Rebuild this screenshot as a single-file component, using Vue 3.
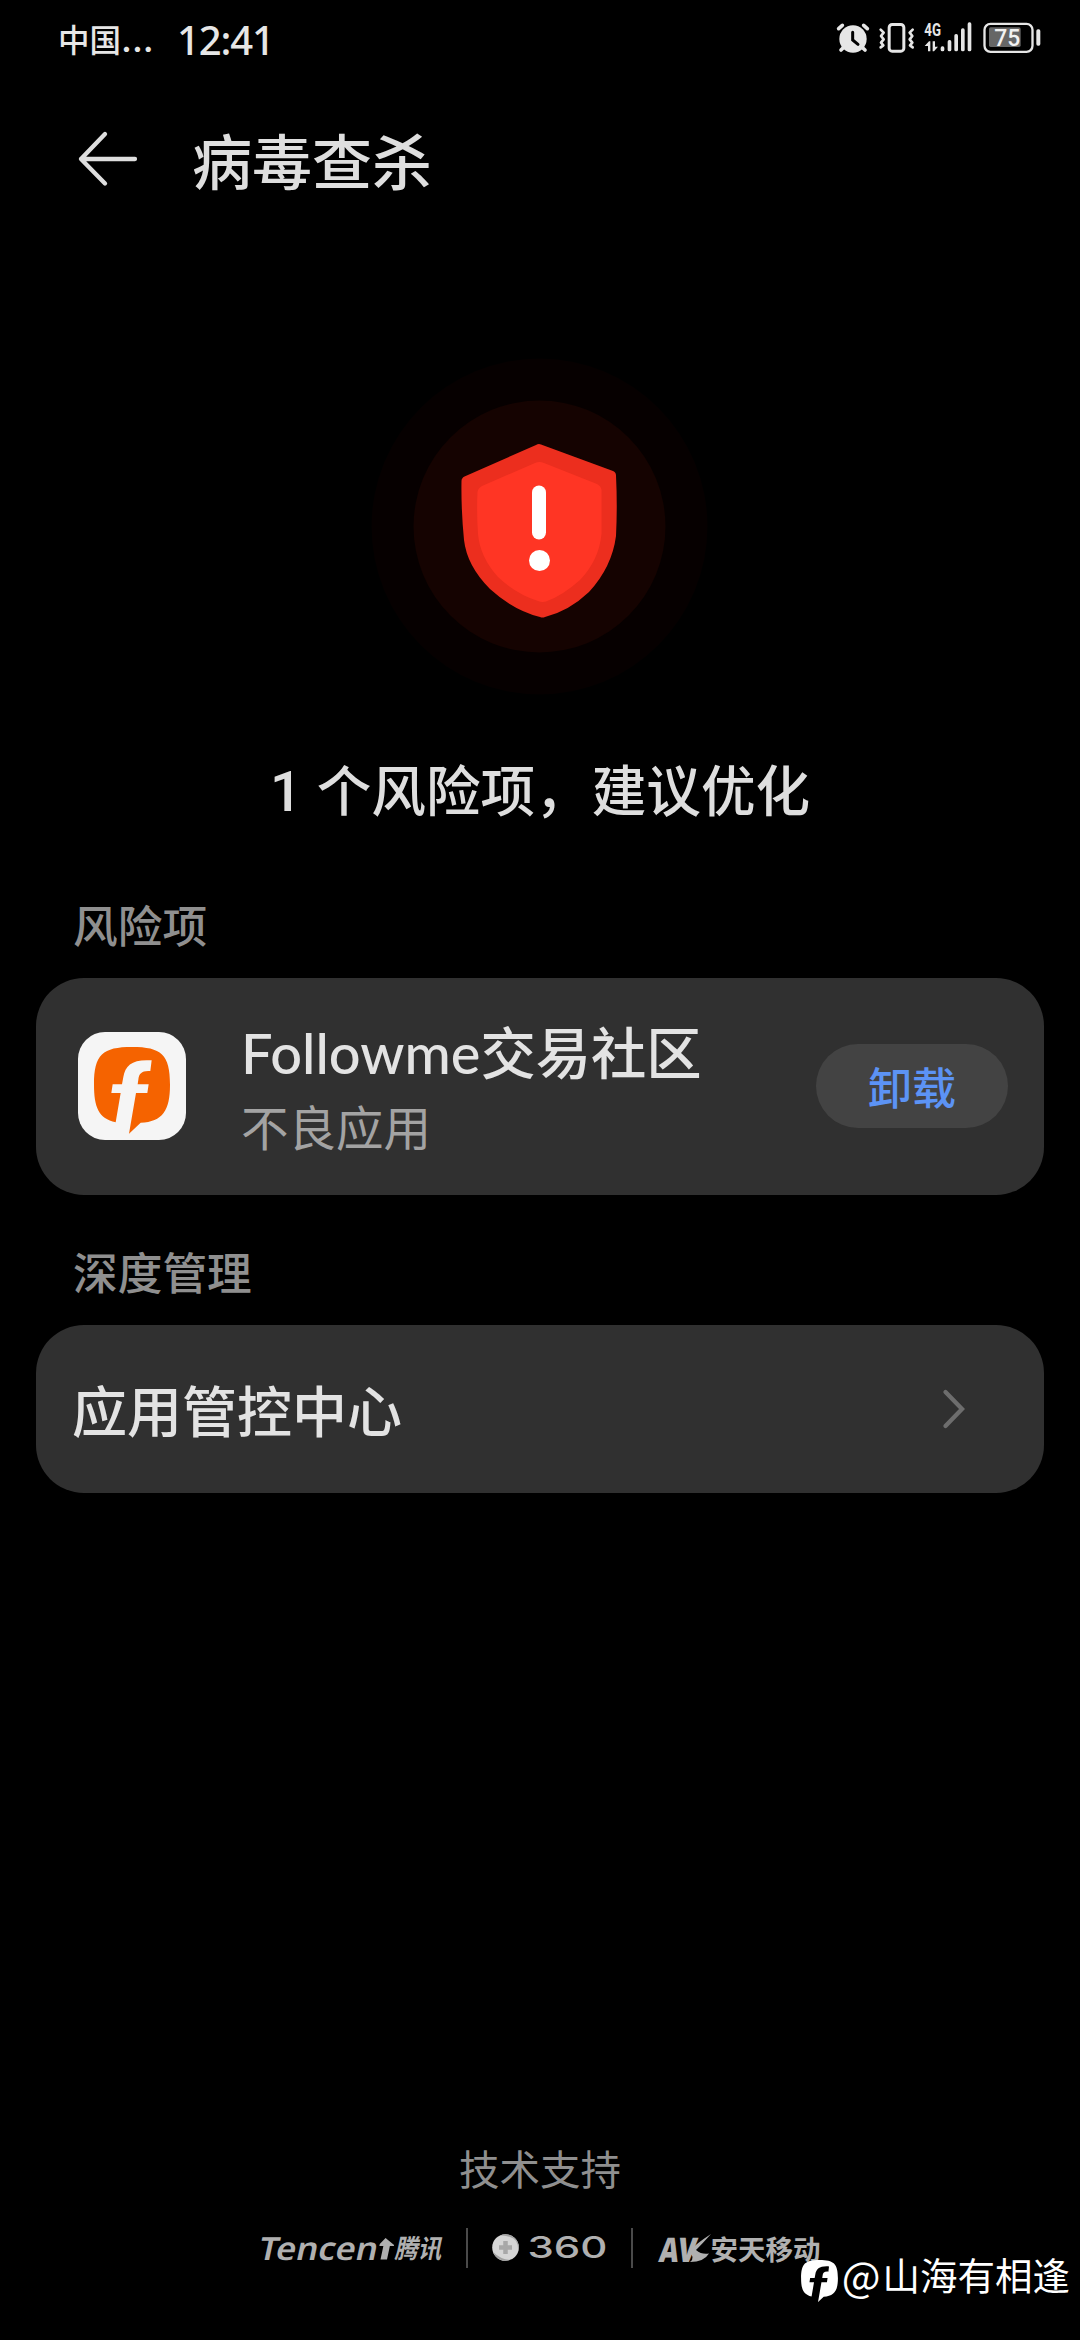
<script setup>
import { h } from 'vue'

const bubble =
  'M306 470C394 470 420 492 420 583C420 660 398 694 332 697L297 730L290 699L257 696C206 684 192 650 192 583C192 492 218 470 306 470Z'
const stem =
  'M365 510L361 542C337 540 327 548 325 568L323 582L356 582L352 608L318 608L297 730L250 730L257 696L272 608L244 608L248 582L276 582L280 560C286 524 308 506 365 510Z'

// Brand mark: speech bubble with the cut-out stem
const BrandMark = (props) =>
  h('svg', { viewBox: '192 470 228 260' }, [
    h('path', { d: bubble, fill: props.fill }),
    h('path', { d: stem, fill: props.cut }),
  ])
BrandMark.props = ['fill', 'cut']

const bars = [
  { x: 422, y: 139 },
  { x: 443, y: 120 },
  { x: 463, y: 102 },
  { x: 483, y: 85 },
  { x: 503, y: 67 },
]
const risks = [{ name: 'Followme', suffix: '交易社区', type: '不良应用' }]
</script>

<template>
  <div class="screen">
    <header class="status">
      <span class="carrier">中国<i>...</i></span>
      <span class="clock">12:41</span>
      <div class="indicators">
        <svg class="alarm" viewBox="108 60 102 102">
          <g stroke="#e6e6e6" stroke-width="11" stroke-linecap="round" fill="none">
            <path d="M116 86L127 76M202 86L191 76M133 140L123 150M184 140L195 150" />
          </g>
          <circle cx="159" cy="117" r="41" fill="#e6e6e6" />
          <path d="M158 97V120L174 133" stroke="#000" stroke-width="9" stroke-linecap="round" fill="none" />
        </svg>
        <svg class="vibrate" viewBox="234 60 114 102" fill="none" stroke="#e6e6e6" stroke-linejoin="round" stroke-linecap="round">
          <rect x="267.500" y="73.500" width="44" height="80" rx="9" stroke-width="9" />
          <path d="M242 89L251 98L243 108L251 118L243 128L250 136L242 142M338 89L329 98L337 108L329 118L337 128L330 136L338 142" stroke-width="8" />
        </svg>
        <svg class="signal" viewBox="369 60 150 102" fill="#e6e6e6">
          <text x="373" y="107" font-size="54" font-weight="700" textLength="50" lengthAdjust="spacingAndGlyphs">4G</text>
          <path d="M374 138L387 124H391V154H384V138ZM398 124H405V140H414L402 154H398Z" />
          <rect v-for="b in bars" :key="b.x" :x="b.x" :y="b.y" width="11" :height="154 - b.y" rx="5" />
        </svg>
        <svg class="battery" viewBox="546 60 180 102">
          <rect x="553.500" y="71.500" width="144" height="84" rx="18" fill="none" stroke="#e6e6e6" stroke-width="7" />
          <rect x="567" y="82" width="95" height="59" rx="5" fill="#666" />
          <rect x="709" y="88" width="12" height="49" rx="5" fill="#e6e6e6" />
          <text x="583" y="139" font-size="73" font-weight="500" fill="#f2f2f2" textLength="78" lengthAdjust="spacingAndGlyphs">75</text>
        </svg>
      </div>
    </header>

    <nav class="titlebar">
      <svg class="back" viewBox="0 0 60 56" fill="none" stroke="#dedede" stroke-width="4.300" stroke-linecap="round" stroke-linejoin="round">
        <path d="M57 28H3M27 3L3 28L27 52.500" />
      </svg>
      <h1>病毒查杀</h1>
    </nav>

    <section class="hero">
      <svg class="shield" viewBox="370 356 340 340">
        <circle cx="539.500" cy="526.500" r="168" fill="#060000" />
        <circle cx="539.500" cy="526.500" r="126" fill="#150301" />
        <path d="M536 445Q538.500 443.500 541 444.500L613 471Q616 472.300 616 475.500Q617.500 506 616 536Q612 567 589 592Q569 611 545 617Q542.500 618 540 617Q513 610 490 589Q467 566 464 540Q461 509 461.500 481Q461.500 478 464.500 476.500Z" fill="#ec2e1e" />
        <path d="M535 463Q539.500 461 544 463L597 484Q601 486 601.500 490V534Q599 560 580 580Q562 596 546 601.500Q542 602.500 538 601Q516 594 498 577Q480 557 478 534Q476.500 512 477.500 492Q478 488 482 486Z" fill="#ff3524" />
        <rect x="532" y="485.500" width="14" height="54" rx="7" fill="#fff" />
        <circle cx="539.500" cy="560.500" r="10.500" fill="#fff" />
      </svg>
      <h2><span>1</span>个风险项，<b>建议优化</b></h2>
    </section>

    <h3 class="label">风险项</h3>
    <ul class="card risks">
      <li v-for="r in risks" :key="r.name">
        <div class="app-icon"><BrandMark class="mark" fill="#f56300" cut="#f5f5f5" /></div>
        <div class="info">
          <p class="name"><span>{{ r.name }}</span>{{ r.suffix }}</p>
          <p class="type">{{ r.type }}</p>
        </div>
        <button>卸载</button>
      </li>
    </ul>

    <h3 class="label deep">深度管理</h3>
    <div class="card link">
      <span>应用管控中心</span>
      <svg viewBox="0 0 22 40" fill="none" stroke="#6d6d6d" stroke-width="4.300" stroke-linecap="round" stroke-linejoin="miter">
        <path d="M2.500 3L19 20L2.500 37" />
      </svg>
    </div>

    <footer>
      <p>技术支持</p>
      <div class="partners">
        <svg class="tencent" viewBox="0 0 190 40" fill="#b0b0b0">
          <g transform="translate(0 31.500) skewX(-12)">
            <text class="latin" x="0" y="0" font-size="32" font-weight="600" textLength="119" lengthAdjust="spacingAndGlyphs">Tencen</text>
            <path d="M123.500 0V-13.500H119.500V-15.500L124 -21.500L134 -14.500V-13.500H130V0Z" />
            <text class="cjk" x="137" y="-1.500" font-size="26" font-weight="700" textLength="47" lengthAdjust="spacingAndGlyphs">腾讯</text>
          </g>
        </svg>
        <i class="rule"></i>
        <svg class="s360" viewBox="0 0 120 40">
          <circle cx="13.500" cy="19.500" r="13.300" fill="#d6d6d6" />
          <path d="M8 7.500A13.300 13.300 0 0 1 26 24Q27 11 18 9Q13 7 8 7.500ZM1 24Q8 31 18 32A13.300 13.300 0 0 1 1 24Z" fill="#a2a2a2" />
          <path d="M13.500 13V26M7 19.500H20" stroke="#a8a8a8" stroke-width="4.500" />
          <text class="wide" x="35.500" y="30" font-size="29.500" font-weight="500" fill="#b0b0b0" textLength="80" lengthAdjust="spacingAndGlyphs">360</text>
        </svg>
        <i class="rule"></i>
        <svg class="avl" viewBox="0 0 164 40" fill="#b0b0b0">
          <g transform="translate(0 33.500) skewX(-8)">
            <text class="latin" x="-1" y="0" font-size="34" font-weight="900" textLength="37" lengthAdjust="spacingAndGlyphs">AV</text>
          </g>
          <path d="M29 24Q38 15 52 6Q44 15 37 22Q43 27 50 25.500Q45 34 31 34Q37 29 29 24Z" />
          <text class="cjk" x="51.500" y="32" font-size="27.500" font-weight="700" textLength="110" lengthAdjust="spacingAndGlyphs">安天移动</text>
        </svg>
      </div>
    </footer>

    <div class="watermark">
      <BrandMark class="mark" fill="#fff" cut="#000" />
      <span class="at">@</span><span class="user">山海有相逢</span>
    </div>
  </div>
</template>

<style>
body {
  margin: 0;
  background: #000;
}
</style>

<style scoped>
.screen {
  position: relative;
  box-sizing: border-box;
  display: flex;
  flex-direction: column;
  width: 1080px;
  height: 2340px;
  overflow: hidden;
  background: #000;
  color: #dedede;
  font-family: "Noto Sans CJK SC", sans-serif;
}
h1, h2, h3, p, ul {
  margin: 0;
  padding: 0;
  font-weight: 500;
}
svg {
  display: block;
  flex: none;
  overflow: visible;
}
svg text {
  font-family: Roboto, sans-serif;
}
svg .latin {
  font-family: "Noto Sans", sans-serif;
}
svg .wide {
  font-family: Inter, sans-serif;
}
svg .cjk {
  font-family: "Noto Sans CJK SC", sans-serif;
}
.status {
  display: flex;
  align-items: center;
  height: 78px;
  padding: 0 38px 0 58px;
  color: #e6e6e6;
}
.carrier {
  width: 119px;
  margin-bottom: 3px;
  font-size: 31.500px;
  font-weight: 500;
  line-height: 74px;
}
.carrier i {
  font: 500 36px/40px Inter, sans-serif;
}
.clock {
  margin-top: 2px;
  font: 500 40px/78px "Noto Sans", sans-serif;
  letter-spacing: -1.100px;
}
.indicators {
  display: flex;
  margin: 0 0 4px auto;
}
.alarm { width: 34px; height: 34px; }
.vibrate { width: 38px; height: 34px; margin-left: 8px; }
.signal { width: 50px; height: 34px; margin-left: 7px; }
.battery { width: 60px; height: 34px; margin-left: 9px; }
.titlebar {
  display: flex;
  align-items: center;
  height: 162px;
  padding-left: 78px;
}
.back {
  width: 60px;
  height: 56px;
}
h1 {
  margin-left: 54px;
  font-size: 60px;
  line-height: 160px;
}
.hero {
  display: flex;
  flex-direction: column;
  align-items: center;
  padding-top: 116px;
}
.shield {
  width: 340px;
  height: 340px;
}
h2 {
  margin-top: 54px;
  font-size: 54.600px;
  line-height: 76px;
}
h2 span {
  margin-right: 15px;
  font: 500 56px/60px Roboto, sans-serif;
}
h2 b {
  margin-left: 2px;
  font-weight: 500;
}
.label {
  margin: 66px 0 0 73px;
  color: #8f8f8f;
  font-size: 44.700px;
  line-height: 64px;
}
.card {
  box-sizing: border-box;
  margin: 0 36px;
  border-radius: 48px;
  background: #303030;
  color: #e3e3e3;
}
.risks {
  height: 217px;
  margin-top: 22px;
  list-style: none;
}
.risks li {
  display: flex;
  align-items: center;
  height: 216px;
  padding: 0 36px 0 42px;
}
.app-icon {
  display: flex;
  justify-content: center;
  width: 108px;
  height: 108px;
  border-radius: 27px;
  background: #f5f5f5;
}
.app-icon .mark {
  width: 76px;
  height: 86.700px;
  margin-top: 14.500px;
}
.info {
  flex: 1;
  margin-left: 55px;
}
.name {
  font-size: 55.300px;
  line-height: 76px;
}
.name span {
  font-family: Lato, sans-serif;
  font-weight: 500;
  font-size: 56px;
}
.type {
  color: #a3a3a3;
  font-size: 47.500px;
  font-weight: 400;
  line-height: 70px;
}
button {
  width: 192px;
  height: 84px;
  padding: 0;
  border: 0;
  border-radius: 42px;
  background: #434343;
  color: #5c93f5;
  font: 500 44px/80px "Noto Sans CJK SC", sans-serif;
}
.deep {
  margin-top: 44px;
}
.link {
  display: flex;
  align-items: center;
  justify-content: space-between;
  height: 168px;
  margin-top: 22px;
  padding: 0 79px 0 36px;
  font-size: 55px;
  font-weight: 500;
}
.link span {
  margin-bottom: 3px;
}
.link svg {
  width: 22px;
  height: 40px;
}
footer {
  display: flex;
  flex-direction: column;
  align-items: center;
  margin-top: auto;
  padding-bottom: 72px;
}
footer p {
  color: #8f8f8f;
  font-size: 40.500px;
  font-weight: 400;
  line-height: 60px;
}
.partners {
  display: flex;
  margin-top: 30px;
}
.tencent { width: 190px; height: 40px; }
.s360 { width: 120px; height: 40px; margin-left: 24px; }
.avl { width: 164px; height: 40px; margin-left: 26px; }
.rule {
  width: 2px;
  height: 40px;
  margin-left: 19px;
  background: #4a4a4a;
}
.watermark {
  position: absolute;
  right: 10px;
  bottom: 38px;
  display: flex;
  align-items: flex-end;
  color: #fff;
  font-size: 37.500px;
  line-height: 56px;
}
.watermark .mark {
  width: 37px;
  height: 42px;
}
.watermark .at {
  margin: 0 2px 0 4px;
  font-size: 41px;
}
</style>
